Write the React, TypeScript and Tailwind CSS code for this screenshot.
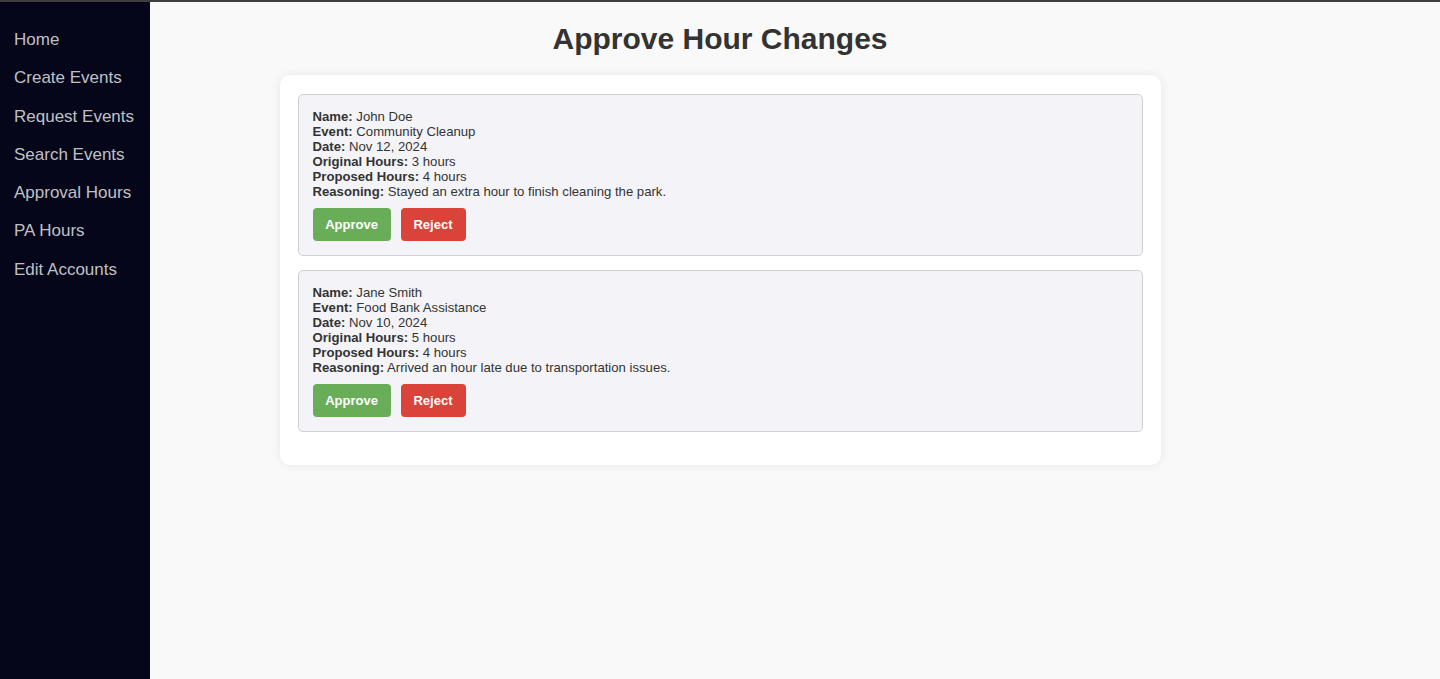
import React from "react";

const items = [
  {
    name: "John Doe",
    event: "Community Cleanup",
    date: "Nov 12, 2024",
    original: "3 hours",
    proposed: "4 hours",
    reasoning: "Stayed an extra hour to finish cleaning the park.",
  },
  {
    name: "Jane Smith",
    event: "Food Bank Assistance",
    date: "Nov 10, 2024",
    original: "5 hours",
    proposed: "4 hours",
    reasoning: "Arrived an hour late due to transportation issues.",
  },
];

const nav = [
  "Home",
  "Create Events",
  "Request Events",
  "Search Events",
  "Approval Hours",
  "PA Hours",
  "Edit Accounts",
];

function Row({ label, value }: { label: string; value: string }) {
  return (
    <div>
      <strong className="font-bold">{label}:</strong> {value}
    </div>
  );
}

export default function App() {
  return (
    <div
      className="flex flex-col h-[679px] w-[1440px] overflow-hidden"
      style={{ fontFamily: '"Liberation Sans", Arial, sans-serif' }}
    >
      <div className="h-[2px] bg-[#3e3e3e] shrink-0" />
      <div className="flex flex-1 min-h-0">
        <nav className="w-[150px] shrink-0 bg-[#05061a] pt-[28px] pl-[14px] flex flex-col">
          {nav.map((n) => (
            <a
              key={n}
              className="text-[17px] leading-[20px] h-[38.3px] text-[#c0c0c4] block"
            >
              {n}
            </a>
          ))}
        </nav>
        <main className="flex-1 bg-[#f9f9f9] pr-[150px]">
          <h1 className="text-[30px] leading-[36px] font-bold text-[#333] text-center mt-[19px] mb-[18px]">
            Approve Hour Changes
          </h1>
          <div className="mx-auto w-[881px] bg-white rounded-[10px] shadow-[0_0_10px_rgba(0,0,0,0.08)] pt-[19px] px-[18px] pb-[19px]">
            {items.map((it) => (
              <div
                key={it.name}
                className="bg-[#f4f4f8] border border-[#cfcfd6] rounded-[5px] px-[14px] pt-[14px] pb-[14px] mb-[14px] text-[13.15px] leading-[15px] text-[#333]"
              >
                <Row label="Name" value={it.name} />
                <Row label="Event" value={it.event} />
                <Row label="Date" value={it.date} />
                <Row label="Original Hours" value={it.original} />
                <Row label="Proposed Hours" value={it.proposed} />
                <Row label="Reasoning" value={it.reasoning} />
                <div className="flex gap-[10px] mt-[9px]">
                  <button className="w-[78px] h-[33px] rounded-[4px] bg-[#6aad58] text-white font-bold text-[13px]">
                    Approve
                  </button>
                  <button className="w-[65px] h-[33px] rounded-[4px] bg-[#d9433a] text-white font-bold text-[13px]">
                    Reject
                  </button>
                </div>
              </div>
            ))}
          </div>
        </main>
      </div>
    </div>
  );
}
